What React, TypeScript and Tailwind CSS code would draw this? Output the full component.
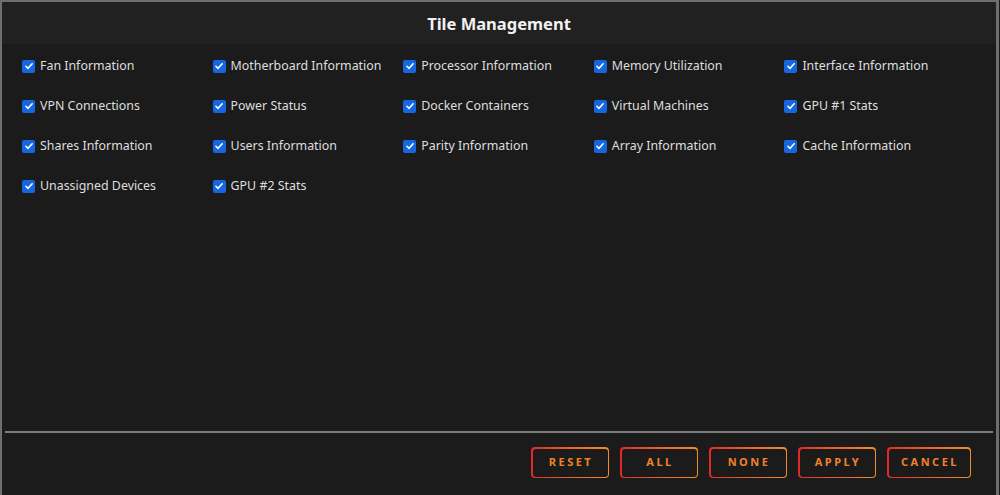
import React from "react";

const tiles = [
  "Fan Information",
  "Motherboard Information",
  "Processor Information",
  "Memory Utilization",
  "Interface Information",
  "VPN Connections",
  "Power Status",
  "Docker Containers",
  "Virtual Machines",
  "GPU #1 Stats",
  "Shares Information",
  "Users Information",
  "Parity Information",
  "Array Information",
  "Cache Information",
  "Unassigned Devices",
  "GPU #2 Stats",
];

const buttons = [
  { label: "RESET", w: "w-[78px]" },
  { label: "ALL", w: "w-[78px]" },
  { label: "NONE", w: "w-[78px]" },
  { label: "APPLY", w: "w-[78px]" },
  { label: "CANCEL", w: "w-[84px]" },
];

function Check() {
  return (
    <span className="flex h-[13px] w-[13px] shrink-0 items-center justify-center rounded-[2px] bg-[#1467e0]">
      <svg viewBox="0 0 12 12" className="h-[10px] w-[10px]">
        <path
          d="M2.3 6.3 L4.9 8.8 L9.8 3.4"
          fill="none"
          stroke="#fff"
          strokeWidth="1.9"
          strokeLinecap="round"
          strokeLinejoin="round"
        />
      </svg>
    </span>
  );
}

export default function App() {
  return (
    <div
      className="h-[495px] w-[1000px] overflow-hidden bg-[#1c1b1c]"
      style={{ fontFamily: "'Noto Sans', 'Open Sans', sans-serif" }}
    >
      <div className="flex h-[510px] w-[999px] flex-col border-l-[2px] border-r-[3px] border-t-[2px] border-[#6e6e6e] bg-[#1c1b1c]">
        {/* header */}
        <div className="flex h-[42px] items-center justify-center bg-[#212121] pt-[2px]">
          <span className="text-[16.5px] font-bold text-[#f2f2f2]">Tile Management</span>
        </div>

        {/* tile checkboxes */}
        <div className="grid h-[387px] w-[973px] grid-cols-5 content-start gap-y-[20px] pl-[20px] pt-[12px]">
          {tiles.map((t) => (
            <label key={t} className="flex h-[20px] items-center gap-[5px]">
              <Check />
              <span className="text-[12.4px] text-[#dedede]">{t}</span>
            </label>
          ))}
        </div>

        {/* divider */}
        <div className="mx-[3px] h-[2px] bg-[#7c7c7c]" />

        {/* actions */}
        <div className="flex justify-end gap-[11px] pr-[25px] pt-[14px]">
          {buttons.map((b) => (
            <div
              key={b.label}
              className={`h-[31px] ${b.w} rounded-[4px] bg-gradient-to-r from-[#e0262a] to-[#f28c28] p-[1.5px]`}
            >
              <div className="flex h-full w-full items-center justify-center rounded-[3px] bg-[#1c1b1c]">
                <span className="pl-[2px] text-[11px] font-bold tracking-[2.5px] text-[#f0822a]">
                  {b.label}
                </span>
              </div>
            </div>
          ))}
        </div>
      </div>
    </div>
  );
}
